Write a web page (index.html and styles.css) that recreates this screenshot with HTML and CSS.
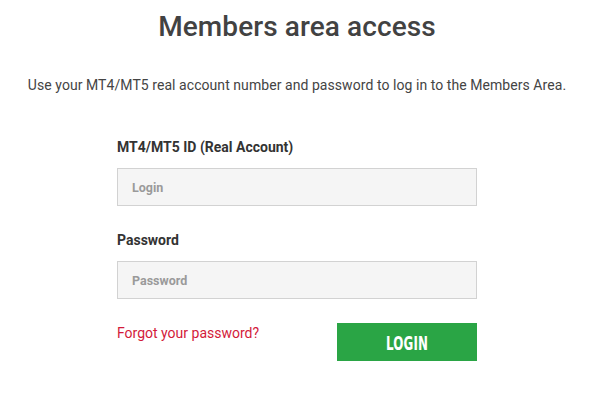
FILE: index.html
```html
<!DOCTYPE html>
<html>
<head>
<meta charset="utf-8">
<link rel="stylesheet" href="styles.css">
</head>
<body>
<main class="page">
  <h1 class="title">Members area access</h1>
  <p class="intro">Use your MT4/MT5 real account number and password to log in to the Members Area.</p>
  <form class="form">
    <label class="label" for="login">MT4/MT5 ID (Real Account)</label>
    <input class="field" id="login" type="text" placeholder="Login">
    <label class="label label-pw" for="pw">Password</label>
    <input class="field" id="pw" type="password" placeholder="Password">
    <div class="actions">
      <a class="forgot" href="#">Forgot your password?</a>
      <button class="btn" type="button"><span class="btn-text">LOGIN</span></button>
    </div>
  </form>
</main>
</body>
</html>
```
FILE: styles.css
```css
html, body {
  margin: 0;
  padding: 0;
  background: #fff;
}
body {
  font-family: Roboto, "Liberation Sans", sans-serif;
  color: #444;
}
.page {
  width: 594px;
  display: flex;
  flex-direction: column;
  align-items: center;
}
.title {
  margin: 10px 0 0;
  font-size: 28px;
  line-height: 33px;
  font-weight: 500;
  color: #424242;
  letter-spacing: 0.1px;
}
.intro {
  margin: 33px 0 0;
  font-size: 14px;
  line-height: 18px;
  color: #444;
  letter-spacing: 0.06px;
}
.form {
  width: 360px;
  display: flex;
  flex-direction: column;
  margin-top: 45px;
}
.label {
  font-size: 14px;
  font-weight: 700;
  color: #333;
  line-height: 16px;
}
.label-pw {
  margin-top: 26px;
}
.field {
  box-sizing: border-box;
  margin-top: 13px;
  width: 360px;
  height: 38px;
  border: 1px solid #d2d2d2;
  background: #f5f5f5;
  padding: 0 14px;
  font-family: Roboto, "Liberation Sans", sans-serif;
  font-size: 12.5px;
  font-weight: 700;
  color: #555;
  outline: none;
}
.field::placeholder {
  color: #9a9a9a;
  opacity: 1;
}
.actions {
  margin-top: 24px;
  display: flex;
  justify-content: space-between;
  align-items: flex-start;
}
.forgot {
  font-size: 14px;
  line-height: 18px;
  color: #d31a3a;
  text-decoration: none;
  margin-top: 1px;
}
.btn {
  width: 140px;
  height: 38px;
  border: none;
  background: #2aa545;
  color: #fff;
  padding: 0;
  display: flex;
  align-items: center;
  justify-content: center;
  cursor: pointer;
}
.btn-text {
  display: inline-block;
  font-family: "DejaVu Sans Condensed", "DejaVu Sans", sans-serif;
  font-weight: 700;
  font-size: 20px;
  transform: scaleX(0.66);
  letter-spacing: 0.3px;
  margin-top: 2px;
}
```
